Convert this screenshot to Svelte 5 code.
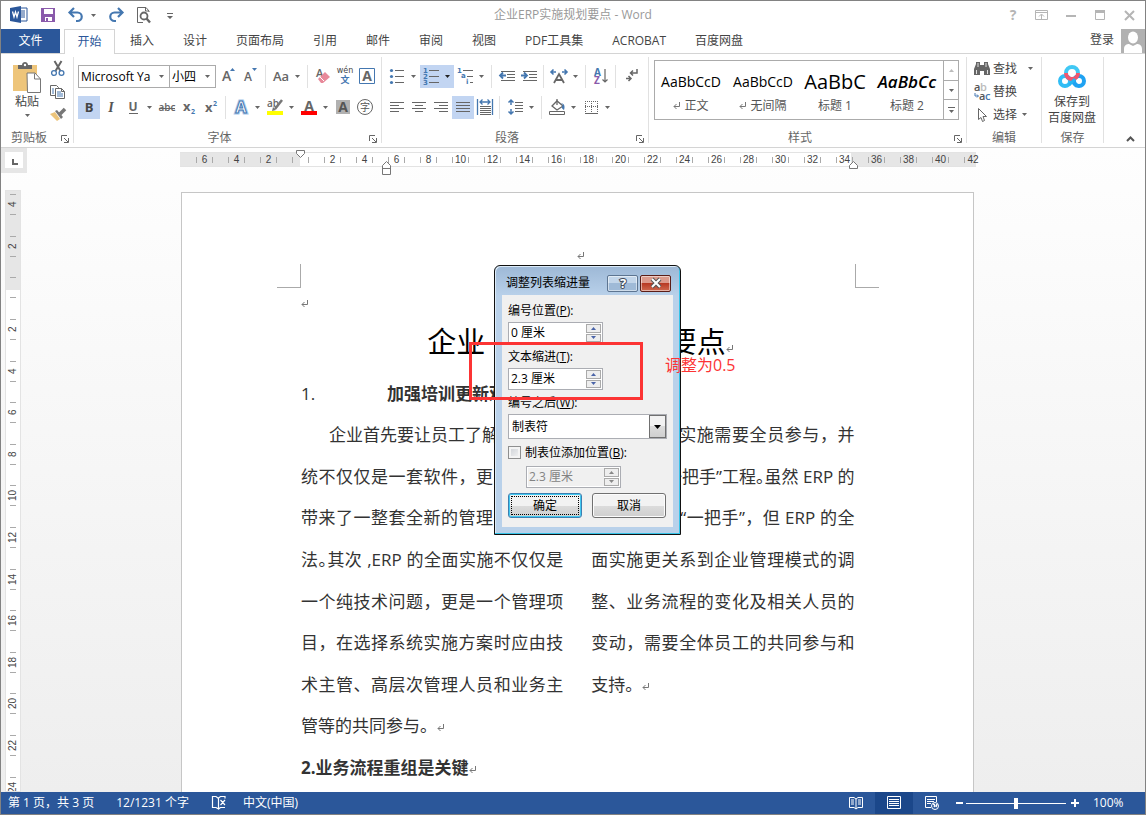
<script>
  const G = '#666';
  const B = '#4477b0';
  const lines = (rows, color = G) =>
    rows.map(([x, y, w]) => `<rect x="${x}" y="${y}" width="${w}" height="1" fill="${color}"/>`).join('');
  const letter = (t, x, y, size, extra = '') =>
    `<text x="${x}" y="${y}" font-size="${size}" font-family="Open Sans, sans-serif" fill="${G}" ${extra}>${t}</text>`;

  const icons = {
    word: `<path d="M10 2h7v13h-7z" fill="#fff" stroke="#2b579a"/><path d="M11 5h4M11 7h4M11 9h4M11 11h4" stroke="#2b579a"/><path d="M0 2 11 0v17L0 15z" fill="#2b579a"/><path d="M2.500 5.500 4 11l1.500-5L7 11l1.500-5.500" fill="none" stroke="#fff" stroke-width="1.300"/>`,
    save: `<path d="M1 1h14v14H1z" fill="#8a5aab"/><path d="M4 2h9v5H4zM5 10h7v4H5z" fill="#fff"/><path d="M6 11h2v4H6z" fill="#8a5aab"/>`,
    undo: `<path d="M6 1 1.500 5.500 6 10M2 5.500h7.500a4 4 0 0 1 0 8.500H8" fill="none" stroke="${B}" stroke-width="2.200"/>`,
    redo: `<path d="M10 1l4.500 4.500L10 10M14 5.500H6.500a4 4 0 0 0 0 8.500H8" fill="none" stroke="${B}" stroke-width="2.200"/>`,
    preview: `<path d="M13 5V4L10 .5H1.500v15H7" fill="none" stroke="${G}"/><path d="M9.500.5V4H13" fill="none" stroke="${G}"/><circle cx="8" cy="9" r="3.500" fill="none" stroke="${G}" stroke-width="1.800"/><path d="m10.500 11.500 3.500 4" stroke="${G}" stroke-width="2.400"/>`,
    customize: `<path d="M5 6h6v1H5zM5 9h6L8 12z" fill="${G}"/>`,
    help: `<text x="8" y="13" font-size="14" font-weight="700" text-anchor="middle" font-family="Open Sans, sans-serif" fill="#b5b5b5">?</text>`,
    ribbonopt: `<path d="M1.500 3.500h12v9h-12zM1.500 5.500h12M7.500 12V7.500M5 9.500l2.500-2.500 2.500 2.500" fill="none" stroke="#b5b5b5"/>`,
    min: `<path d="M3 8h10v2H3z" fill="#b5b5b5"/>`,
    max: `<path d="M3.500 4.500h9v8h-9z" fill="none" stroke="#b5b5b5"/><path d="M3 3h10v3H3z" fill="#b5b5b5"/>`,
    close: `<path d="m4 4 9 9M13 4l-9 9" stroke="#b5b5b5" stroke-width="2"/>`,
    cut: `<path d="M4.500 0 10.500 10M11.500 0 5.500 10" stroke="${G}" stroke-width="2"/><circle cx="4" cy="12" r="2.400" fill="#fff" stroke="${B}" stroke-width="1.300"/><circle cx="11.500" cy="12" r="2.400" fill="#fff" stroke="${B}" stroke-width="1.300"/>`,
    copy: `<path d="M.5 1.500h6l2 2v8h-8z" fill="#fff" stroke="${G}"/><path d="M5.500 4.500h6l3 3v7h-9z" fill="#fff" stroke="${G}"/><path d="M2 5h2M2 7h2M2 9h2M7 8h4M7 10h6M7 12h6" stroke="${B}"/><path d="M11.500 4.500v3h3" fill="none" stroke="${G}"/>`,
    brush: `<path d="M0 7 7 14 10 12 5 5z" fill="#ecc47a"/><path d="m5 4 6 8 2-2-6-7z" fill="#777"/><path d="m10 7 5-5" stroke="#777" stroke-width="3.500"/>`,
    grow: letter('A', 1, 13, 14, 'font-weight="600"') + `<path d="M9 3h5L11.500 0z" fill="${B}"/>`,
    shrink: letter('A', 1, 13, 12, 'font-weight="600"') + `<path d="M9 0h5l-2.500 3z" fill="${B}"/>`,
    erase: letter('A', 1, 9, 11, 'font-weight="600"') + `<path d="m3 11 7-7 5 5-7 6H6z" fill="#e8899a"/><path d="m5 9 4 4" stroke="#fff"/>`,
    phonetic: `<text x="8" y="5" text-anchor="middle" font-size="8" font-family="DejaVu Sans, sans-serif" fill="#444">wén</text><text x="8" y="15" text-anchor="middle" font-size="9" font-weight="700" font-family="Noto Sans CJK SC, sans-serif" fill="${B}">文</text>`,
    border: `<path d="M.5.5h15v15H.5z" fill="#fff" stroke="${B}"/>` + letter('A', 8, 13, 14, 'text-anchor="middle" font-weight="700"'),
    bold: `<text x="8" y="13" text-anchor="middle" font-size="13" font-weight="700" font-family="Open Sans, sans-serif" fill="#444">B</text>`,
    italic: `<text x="8" y="13" text-anchor="middle" font-size="14" font-style="italic" font-weight="700" font-family="Liberation Serif, serif" fill="#555">I</text>`,
    underline: letter('U', 8, 12, 12, 'text-anchor="middle" font-weight="700"') + lines([[4, 14, 9]]),
    strike: letter('abc', 8, 12, 10, 'text-anchor="middle" font-weight="600"') + lines([[0, 9, 16]]),
    sub: letter('x', 2, 12, 13, 'font-weight="700"') + `<text x="10" y="15" font-size="7" font-weight="700" font-family="Open Sans, sans-serif" fill="${B}">2</text>`,
    sup: letter('x', 2, 13, 13, 'font-weight="700"') + `<text x="10" y="7" font-size="7" font-weight="700" font-family="Open Sans, sans-serif" fill="${B}">2</text>`,
    effect: `<text x="8" y="14" text-anchor="middle" font-size="16" font-weight="700" font-family="Open Sans, sans-serif" fill="#fff" stroke="#a9c8ea" stroke-width="3">A</text><text x="8" y="14" text-anchor="middle" font-size="16" font-weight="700" font-family="Open Sans, sans-serif" fill="#fff" stroke="${B}">A</text>`,
    highlight: letter('ab', 0, 8, 10, 'font-weight="600"') + `<path d="m15 1-7 9" stroke="#777" stroke-width="2.500"/><path d="m6 8 3 3-4 1z" fill="#777"/><path d="M0 12h16v4H0z" fill="#ff0"/>`,
    fontcolor: letter('A', 8, 12, 14, 'text-anchor="middle" font-weight="700"') + `<path d="M0 12h16v4H0z" fill="#f00"/>`,
    shade: `<path d="M1 1h14v14H1z" fill="#b1b1b1"/><text x="8" y="13" text-anchor="middle" font-size="14" font-weight="700" font-family="Open Sans, sans-serif" fill="#555">A</text>`,
    enclose: `<circle cx="8" cy="8" r="7.500" fill="none" stroke="${G}"/><text x="8" y="12" text-anchor="middle" font-size="10" font-family="Noto Sans CJK SC, sans-serif" fill="#555">字</text>`,
    bullets: `<g fill="${B}"><circle cx="2.500" cy="2.500" r="1.600"/><circle cx="2.500" cy="8.500" r="1.600"/><circle cx="2.500" cy="14.500" r="1.600"/></g>` + lines([[6, 2, 9], [6, 8, 9], [6, 14, 9]]),
    numbers: ['1', '2', '3'].map((n, i) => `<text x="0" y="${5 + i * 6}" font-size="7" font-weight="700" font-family="DejaVu Sans, sans-serif" fill="${B}">${n}</text>`).join('') + lines([[6, 2, 10], [6, 8, 10], [6, 14, 10]]),
    levels: `<g font-size="7" font-weight="700" font-family="DejaVu Sans, sans-serif" fill="${B}"><text x="0" y="5">1</text><text x="4" y="10">a</text><text x="9" y="16">i</text></g>` + lines([[6, 2, 10], [10, 8, 6], [13, 14, 3]]),
    outdent: lines([[2, 3, 14], [8, 6, 8], [8, 9, 8], [2, 12, 14]]) + `<path d="M7 7.500H1M4 4.500l-3 3 3 3" fill="none" stroke="${B}" stroke-width="1.800"/>`,
    indent: lines([[2, 3, 14], [8, 6, 8], [8, 9, 8], [2, 12, 14]]) + `<path d="M0 7.500h6M3 4.500l3 3-3 3" fill="none" stroke="${B}" stroke-width="1.800"/>`,
    scale: `<path d="m3 15 5-9 5 9M5 12h6" fill="none" stroke="${G}" stroke-width="1.800"/><path d="M0 4h5M2.500 1.500 0 4l2.500 2.500M11 4h5M13.500 1.500 16 4l-2.500 2.500" fill="none" stroke="${B}" stroke-width="1.600"/>`,
    sort: `<text x="1" y="8" font-size="10" font-weight="700" font-family="Open Sans, sans-serif" fill="${B}">A</text><text x="1" y="16" font-size="10" font-weight="700" font-family="Open Sans, sans-serif" fill="#8a5aab">Z</text><path d="M12 1v13M9.500 11.500 12 14l2.500-2.500" fill="none" stroke="${G}" stroke-width="1.200"/>`,
    marks: `<path d="M14 1v4H8M10 2.500 7.500 5l2.500 2.500M3 10.500h5M5.500 8 8 10.500 5.500 13" fill="none" stroke="${G}" stroke-width="1.500"/>`,
    left: lines([[1, 3, 14], [1, 6, 9], [1, 9, 14], [1, 12, 9]]),
    center: lines([[1, 3, 14], [4, 6, 8], [1, 9, 14], [4, 12, 8]]),
    right: lines([[1, 3, 14], [6, 6, 9], [1, 9, 14], [6, 12, 9]]),
    justify: lines([[1, 3, 14], [1, 6, 14], [1, 9, 14], [1, 12, 14]]),
    distribute: `<path d="M.5 0v16M15.500 0v16M3 3h10M5.500.5 3 3l2.500 2.500M10.500.5 13 3l-2.500 2.500" fill="none" stroke="${B}" stroke-width="1.300"/>` + lines([[3, 7, 11], [3, 9, 11], [3, 11, 11], [3, 13, 11], [3, 15, 11]]),
    spacing: `<path d="M4 1v5M1.500 3.500 4 1l2.500 2.500M4 10v5M1.500 12.500 4 15l2.500-2.500" fill="none" stroke="${B}" stroke-width="1.500"/>` + lines([[8, 3, 8], [8, 6, 8], [8, 9, 8], [8, 12, 8]]),
    fill: `<path d="m3 7 5-5 6 5-6 4z" fill="#fff" stroke="${G}" stroke-width="1.300"/><path d="M8 6V0" stroke="${G}" stroke-width="1.300"/><path d="M12 4c4 1 4 4 3 7-2-1-3-3-1-5z" fill="${B}"/><path d="M.5 12.500h15v3H.5z" fill="#fff" stroke="${G}"/>`,
    grid: `<path d="M2.500 2v11M8.500 2v11M14.500 2v11M2 2.500h13M2 7.500h13" stroke="${G}" stroke-dasharray="1 1"/>` + lines([[2, 14, 13]]),
    find: `<path d="M2 3V1h4v3h4V1h4v2l2 5v6h-6v-4H6v4H0V8z" fill="${G}"/><path d="M2.500 9v4M13.500 9v4M4 2v4M12 2v4" stroke="#fff" stroke-width=".8"/>`,
    replace: `<g font-size="11" font-weight="600" font-family="Open Sans, sans-serif"><text x="0" y="7" fill="#555">a</text><text x="6" y="7" fill="#bbb">b</text><text x="5" y="16" fill="#555">a</text><text x="11" y="16" fill="${B}">c</text></g><path d="M1 9v3h3M3 10.500 4.500 12 3 13.500" fill="none" stroke="${B}"/>`,
    select: `<path d="M4.500 1.500v11l2.500-2 1.500 4 2-1-1.500-4h3.500z" fill="#fff" stroke="${G}"/>`,
    launcher: `<path d="M.5 6V.5H6" fill="none" stroke="${G}"/><path d="M3 3l4 4M7.500 3v4.500H3" fill="none" stroke="${G}"/>`,
    spell: `<path d="M7.500 3.500 5 1.500H1.500v11H5l2.500 1.500V3l2-1.500H14v2M7.500 14l2-1.500H14M9.500 5l4.500 5M14 5l-4.500 5" fill="none" stroke="#fff" stroke-width="1.200"/>`,
    read: `<path d="M8 4 6 2.500H1.500v10H6L8 14l2-1.500h4.500v-10H10zM8 4v10M3 5h3M3 7h3M3 9h3M10 5h3M10 7h3M10 9h3" fill="none" stroke="#fff"/>`,
    print: `<path d="M1.500 1.500h13v12h-13zM3 4.500h10M3 6.500h10M3 8.500h10M3 10.500h10" fill="none" stroke="#fff"/>`,
    web: `<path d="M7 12.500H1.500v-11h11V7M3 4.500h8M3 6.500h7M3 8.500h4" fill="none" stroke="#fff"/><circle cx="11" cy="11" r="3.500" fill="#2b579a" stroke="#fff"/><path d="M9 9c2 0 2 2 1 3M13 9l-1 3" stroke="#fff" stroke-width="1.500" fill="none"/>`
  };

  const tabs = ['插入', '设计', '页面布局', '引用', '邮件', '审阅', '视图', 'PDF工具集', 'ACROBAT', '百度网盘'];
  const windowButtons = [['help', '帮助'], ['ribbonopt', '功能区显示选项'], ['min', '最小化'], ['max', '最大化'], ['close', '关闭']];
  const styles = [
    { sample: 'AaBbCcD', name: '正文', mark: true, kind: '' },
    { sample: 'AaBbCcD', name: '无间隔', mark: true, kind: '' },
    { sample: 'AaBbC', name: '标题 1', mark: false, kind: 'h1' },
    { sample: 'AaBbCc', name: '标题 2', mark: false, kind: 'h2' }
  ];
  const hTicks = Array.from({ length: 25 }, (_, i) => Math.abs(i * 2 - 6));
  const vTicks = Array.from({ length: 15 }, (_, i) => Math.abs(i * 2 - 4));

  let first = $state('0 厘米');
  let indent = $state('2.3 厘米');
  let tabStop = $state('2.3 厘米');
  let addStop = $state(false);
  let zoom = $state(50);
</script>

{#snippet icon(name, size = 16)}
  <svg width={size} height={size} viewBox="0 0 {size} {size}" aria-hidden="true">{@html icons[name]}</svg>
{/snippet}
{#snippet arrow()}
  <svg class="arrow" width="5" height="3" viewBox="0 0 5 3" aria-hidden="true"><path d="M0 0h5L2.500 3z" fill="currentColor" /></svg>
{/snippet}
{#snippet tool(name, label, on = false)}
  <button class="tool" class:on aria-label={label}>{@render icon(name)}</button>
{/snippet}
{#snippet split(name, label, on = false)}
  <span class="split" class:on>
    <button class="tool" aria-label={label}>{@render icon(name)}</button>
    <button class="drop" aria-label="{label}选项">{@render arrow()}</button>
  </span>
{/snippet}
{#snippet pilcrow()}
  <svg class="pilcrow" width="8" height="8" viewBox="0 0 8 8" aria-hidden="true"><path d="M6.500 0v4.500H1M3.500 2 1 4.500 3.500 7" fill="none" stroke="#777" /></svg>
{/snippet}
{#snippet footer(name)}
  <footer class="launchable"><span>{name}</span><button class="launch" aria-label="{name}设置">{@render icon('launcher', 8)}</button></footer>
{/snippet}
{#snippet spinButtons(disabled = false)}
  <span class="spin-buttons">
    <button type="button" {disabled} aria-label="增加"><svg width="5" height="3" viewBox="0 0 5 3"><path d="M0 3h5L2.500 0z" fill="currentColor" /></svg></button>
    <button type="button" {disabled} aria-label="减少">{@render arrow()}</button>
  </span>
{/snippet}

<div class="window">
  <header class="titlebar">
    <div class="quick">
      <span class="logo">{@render icon('word', 18)}</span>
      <button aria-label="保存">{@render icon('save')}</button>
      <button class="with-drop" aria-label="撤消">{@render icon('undo')}{@render arrow()}</button>
      <button aria-label="恢复">{@render icon('redo')}</button>
      <button aria-label="打印预览">{@render icon('preview')}</button>
      <button class="custom" aria-label="自定义快速访问工具栏">{@render icon('customize')}</button>
    </div>
    <h1>企业ERP实施规划要点 - Word</h1>
    <div class="win-buttons">
      {#each windowButtons as [name, label]}
        <button aria-label={label}>{@render icon(name)}</button>
      {/each}
    </div>
  </header>

  <nav class="tabs">
    <button class="file">文件</button>
    <button class="active">开始</button>
    {#each tabs as tab}
      <button class="tab">{tab}</button>
    {/each}
    <button class="login">登录</button>
    <span class="avatar">
      <svg width="24" height="24" viewBox="0 0 24 24" aria-hidden="true"><path d="M0 0h24v24H0z" fill="#b1b1b1" /><ellipse cx="12" cy="8.500" rx="5" ry="6" fill="#fff" /><path d="M3 24v-4c0-4 3-5 5-5l4 2 4-2c2 0 5 1 5 5v4z" fill="#fff" /></svg>
    </span>
  </nav>

  <section class="ribbon">
    <div class="group clipboard">
      <div class="content">
        <button class="paste">
          <svg width="28" height="31" viewBox="0 0 28 31" aria-hidden="true">
            <path d="M0 3h24v26H0z" fill="#eec57a" /><path d="M5 7V3h4c0-4 6-4 6 0h4v4z" fill="#666" /><circle cx="12" cy="3" r="1.200" fill="#fff" />
            <path d="M14 11h8l5.500 6v13.500H14.500z" fill="#fff" stroke="#777" /><path d="M21.500 11.500v5.500h6" fill="none" stroke="#777" />
          </svg>
          <span>粘贴</span>
          {@render arrow()}
        </button>
        <div class="stack">
          <button aria-label="剪切">{@render icon('cut')}</button>
          <button aria-label="复制">{@render icon('copy')}</button>
          <button aria-label="格式刷">{@render icon('brush')}</button>
        </div>
      </div>
      {@render footer('剪贴板')}
    </div>

    <div class="group font">
      <div class="content rows">
        <div class="row">
          <label class="combo family"><select aria-label="字体"><option>Microsoft Ya</option></select>{@render arrow()}</label>
          <label class="combo size"><select aria-label="字号"><option>小四</option></select>{@render arrow()}</label>
          {@render tool('grow', '增大字号')}
          {@render tool('shrink', '减小字号')}
          <i class="sep"></i>
          <span class="split"><button class="tool case">Aa</button><button class="drop" aria-label="更改大小写">{@render arrow()}</button></span>
          <i class="sep"></i>
          {@render tool('erase', '清除格式')}
          {@render tool('phonetic', '拼音指南')}
          {@render tool('border', '字符边框')}
        </div>
        <div class="row">
          {@render tool('bold', '加粗', true)}
          {@render tool('italic', '倾斜')}
          {@render split('underline', '下划线')}
          {@render tool('strike', '删除线')}
          {@render tool('sub', '下标')}
          {@render tool('sup', '上标')}
          <i class="sep"></i>
          {@render split('effect', '文本效果')}
          {@render split('highlight', '突出显示')}
          {@render split('fontcolor', '字体颜色')}
          {@render tool('shade', '字符底纹')}
          {@render tool('enclose', '带圈字符')}
        </div>
      </div>
      {@render footer('字体')}
    </div>

    <div class="group paragraph">
      <div class="content rows">
        <div class="row">
          {@render split('bullets', '项目符号')}
          {@render split('numbers', '编号', true)}
          {@render split('levels', '多级列表')}
          <i class="sep"></i>
          {@render tool('outdent', '减少缩进量')}
          {@render tool('indent', '增加缩进量')}
          <i class="sep"></i>
          {@render split('scale', '中文版式')}
          <i class="sep"></i>
          {@render tool('sort', '排序')}
          <i class="sep"></i>
          {@render tool('marks', '显示编辑标记')}
        </div>
        <div class="row">
          {@render tool('left', '左对齐')}
          {@render tool('center', '居中')}
          {@render tool('right', '右对齐')}
          {@render tool('justify', '两端对齐', true)}
          {@render tool('distribute', '分散对齐')}
          <i class="sep"></i>
          {@render split('spacing', '行距')}
          <i class="sep"></i>
          {@render split('fill', '底纹')}
          {@render split('grid', '边框')}
        </div>
      </div>
      {@render footer('段落')}
    </div>

    <div class="group styles">
      <div class="content">
        <div class="gallery">
          {#each styles as s}
            <button class="style {s.kind}">
              <span class="sample">{s.sample}</span>
              <span class="name">{#if s.mark}{@render pilcrow()}{/if}{s.name}</span>
            </button>
          {/each}
          <div class="scroller">
            <button disabled aria-label="上一行"><svg width="5" height="3" viewBox="0 0 5 3"><path d="M0 3h5L2.500 0z" fill="#bbb" /></svg></button>
            <button aria-label="下一行">{@render arrow()}</button>
            <button class="more" aria-label="其他">{@render arrow()}</button>
          </div>
        </div>
      </div>
      {@render footer('样式')}
    </div>

    <div class="group edit">
      <div class="content stack">
        <button>{@render icon('find')}<span>查找</span><b class="wide">{@render arrow()}</b></button>
        <button>{@render icon('replace')}<span>替换</span></button>
        <button>{@render icon('select')}<span>选择</span><b>{@render arrow()}</b></button>
      </div>
      <footer><span>编辑</span></footer>
    </div>

    <div class="group cloud">
      <div class="content">
        <button class="disk">
          <svg width="28" height="24" viewBox="0 0 28 24" aria-hidden="true" fill="none">
            <path d="M9 12 14 16l5 5" stroke="#27b5f3" stroke-width="4" />
            <circle cx="7" cy="16" r="5" stroke="#30bdf5" stroke-width="4" />
            <circle cx="21" cy="16" r="5" stroke="#1fa2f2" stroke-width="4" />
            <path d="M8 8a6 6 0 0 1 12 0" stroke="#40c8f4" stroke-width="4" />
            <path d="M8 8a6 6 0 0 0 12 0" stroke="#f2566d" stroke-width="4" />
            <path d="m11 20 6-6" stroke="#27b5f3" stroke-width="3" />
          </svg>
          <span>保存到<br />百度网盘</span>
        </button>
      </div>
      <footer><span>保存</span></footer>
    </div>
    <button class="collapse" aria-label="折叠功能区"><svg width="9" height="6" viewBox="0 0 9 6"><path d="m1 5 3.500-3.500L8 5" fill="none" stroke="#555" stroke-width="2" /></svg></button>
  </section>

  <main>
    <div class="corner"><button aria-label="制表符类型"><svg width="6" height="6" viewBox="0 0 6 6"><path d="M1 0v5h5" fill="none" stroke="#666" stroke-width="2" /></svg></button></div>
    <div class="hruler">
      <div class="scale">
        {#each hTicks as n}
          <span><b>{n || ''}</b></span>
        {/each}
        <svg class="mark first" width="9" height="8" viewBox="0 0 9 8"><path d="M.5.5h8v3l-4 4-4-4z" fill="#fff" stroke="#777" /></svg>
        <svg class="mark hang" width="9" height="14" viewBox="0 0 9 14"><path d="M.5 13.500V4.500l4-4 4 4v9zM.5 7.500h8" fill="#fff" stroke="#777" /></svg>
        <svg class="mark end" width="9" height="8" viewBox="0 0 9 8"><path d="M.5 7.500v-3l4-4 4 4v3z" fill="#fff" stroke="#777" /></svg>
      </div>
    </div>
    <div class="vruler">
      <div class="vscale">
        {#each vTicks as n}
          <span><b>{n || ''}</b></span>
        {/each}
      </div>
    </div>
    <div class="canvas">
      <article class="page">
        <div class="head">{@render pilcrow()}</div>
        <i class="crop tl"></i><i class="crop tr"></i>
        <div class="blank">{@render pilcrow()}</div>
        <h2>企业&nbsp; ERP实施规划要点{@render pilcrow()}</h2>
        <h3><span class="num">1.</span>加强培训更新观念{@render pilcrow()}</h3>
        <div class="columns">
          <div>
            <p>
              <span class="line start">企业首先要让员工了解到ERP系</span>
              <span class="line">统不仅仅是一套软件，更是为企业</span>
              <span class="line">带来了一整套全新的管理思想和方</span>
              <span class="line">法<span class="half">。</span>其次 ,ERP 的全面实施不仅仅是</span>
              <span class="line">一个纯技术问题，更是一个管理项</span>
              <span class="line">目，在选择系统实施方案时应由技</span>
              <span class="line">术主管、高层次管理人员和业务主</span>
              <span class="line last">管等的共同参与。{@render pilcrow()}</span>
            </p>
            <h4>2.业务流程重组是关键{@render pilcrow()}</h4>
          </div>
          <p>
            <span class="line">因此系统的实施需要全员参与，并</span>
            <span class="line">且是企业“一把手”工程<span class="half">。</span>虽然 ERP 的</span>
            <span class="line">实 施 需 要 “一把手”，但 ERP 的全</span>
            <span class="line">面实施更关系到企业管理模式的调</span>
            <span class="line">整、业务流程的变化及相关人员的</span>
            <span class="line">变动，需要全体员工的共同参与和</span>
            <span class="line last">支持。{@render pilcrow()}</span>
          </p>
        </div>

        <form class="dialog" onsubmit={(e) => e.preventDefault()}>
          <header>
            <strong>调整列表缩进量</strong>
            <button type="button" class="q" aria-label="帮助"><svg width="12" height="12" viewBox="0 0 12 12"><text x="6" y="11" text-anchor="middle" font-size="13" font-weight="700" font-family="Open Sans, sans-serif" fill="#fff" stroke="#444d5c" stroke-width="2" paint-order="stroke">?</text></svg></button>
            <button type="button" class="x" aria-label="关闭"><svg width="12" height="10" viewBox="0 0 12 10"><path d="m2 1 8 8M10 1 2 9" stroke="#555" stroke-width="4" /><path d="m2 1 8 8M10 1 2 9" stroke="#fff" stroke-width="2" /></svg></button>
          </header>
          <div class="body">
            <label for="pos">编号位置(<u>P</u>):</label>
            <div class="spin"><input id="pos" bind:value={first} />{@render spinButtons()}</div>
            <label for="ind">文本缩进(<u>T</u>):</label>
            <div class="spin"><input id="ind" bind:value={indent} />{@render spinButtons()}</div>
            <label for="after">编号之后(<u>W</u>):</label>
            <div class="choice"><select id="after"><option>制表符</option></select><span><svg width="7" height="4" viewBox="0 0 7 4"><path d="M0 0h7L3.500 4z" /></svg></span></div>
            <div class="check"><input id="stop" type="checkbox" bind:checked={addStop} /><label for="stop">制表位添加位置(<u>B</u>):</label></div>
            <div class="spin off"><input aria-label="制表位" bind:value={tabStop} disabled />{@render spinButtons(true)}</div>
            <div class="actions"><button class="ok">确定</button><button type="button">取消</button></div>
          </div>
        </form>
        <div class="frame"></div>
        <div class="note">调整为0.5</div>
      </article>
    </div>
  </main>

  <footer class="status">
    <span>第 1 页，共 3 页</span>
    <span>12/1231 个字</span>
    <button aria-label="校对">{@render icon('spell')}</button>
    <span>中文(中国)</span>
    <div class="views">
      <button aria-label="阅读视图">{@render icon('read')}</button>
      <button class="current" aria-label="页面视图">{@render icon('print')}</button>
      <button aria-label="Web 版式视图">{@render icon('web')}</button>
    </div>
    <button class="step" aria-label="缩小"><svg width="8" height="8" viewBox="0 0 8 8"><path d="M0 3h7v2H0z" fill="#fff" /></svg></button>
    <input type="range" min="0" max="100" bind:value={zoom} aria-label="缩放" />
    <button class="step" aria-label="放大"><svg width="8" height="8" viewBox="0 0 8 8"><path d="M0 3h3V0h2v3h3v2H5v3H3V5H0z" fill="#fff" /></svg></button>
    <span class="percent">100%</span>
  </footer>
</div>

<style>
  :global(body) { margin: 0; }
  .window, .window * { box-sizing: border-box; }
  .window {
    display: flex; flex-direction: column; height: 100vh; overflow: hidden;
    border: 1px solid #828282; background: #fff; color: #444;
    font: 12px/16px "Open Sans", "Noto Sans CJK SC", sans-serif;
  }
  button { padding: 0; border: 0; background: none; font: inherit; color: inherit; display: flex; align-items: center; justify-content: center; }
  svg { display: block; flex: none; overflow: visible; }
  select, input { font: inherit; margin: 0; }
  h1, h2, h3, h4, p { margin: 0; font-weight: 400; }
  .arrow { color: #666; }

  .titlebar { display: grid; grid-template-columns: 1fr auto 1fr; height: 28px; align-items: center; flex: none; }
  .titlebar h1 { font-size: 12px; color: #999; }
  .quick { display: flex; align-items: center; padding-left: 9px; gap: 12px; }
  .quick .with-drop { gap: 7px; }
  .quick .custom { margin-left: -2px; }
  .win-buttons { display: flex; justify-content: flex-end; gap: 13px; padding-right: 8px; }

  .tabs { display: flex; height: 25px; flex: none; border-bottom: 1px solid #d4d4d4; }
  .tabs button { white-space: nowrap; }
  .tabs .file { width: 59px; background: #2b579a; color: #fff; margin-right: 4px; }
  .tabs .active { width: 51px; margin: 0 1px -1px 0; border: 1px solid #d4d4d4; border-bottom: 0; background: #fff; color: #2b579a; }
  .tabs .tab { padding: 0 14px; margin-right: 1px; }
  .tabs .login { margin: 0 7px 2px auto; }

  .ribbon { display: flex; height: 94px; flex: none; padding: 3px 0 4px; border-bottom: 1px solid #d4d4d4; position: relative; }
  .group { display: flex; flex-direction: column; border-right: 1px solid #e1e1e1; flex: none; }
  .content { display: flex; height: 73px; flex: none; }
  .group footer { display: flex; justify-content: center; height: 13px; position: relative; color: #666; }
  .group .launchable { padding-right: 20px; }
  .launch { position: absolute; right: 4px; bottom: 0; }
  .clipboard { width: 73px; }
  .clipboard .content { padding-left: 10px; }
  .group.clipboard footer { padding-right: 16px; }
  .paste { flex-direction: column; width: 32px; justify-content: flex-start; padding-top: 5px; gap: 1px; margin-right: 7px; }
  .paste .arrow { margin-top: 3px; }
  .stack { display: flex; flex-direction: column; }
  .stack button { height: 23px; }
  .rows { flex-direction: column; gap: 8px; padding-top: 8px; }
  .row { display: flex; height: 23px; }
  .font { width: 308px; padding-left: 4px; }
  .paragraph { width: 267px; padding-left: 4px; }
  .tool { width: 22px; padding-bottom: 1px; }
  .tool.case { font-weight: 600; font-size: 13px; color: #666; }
  .split { display: flex; margin-right: 2px; }
  .split.on { margin-right: 0; padding-right: 2px; }
  .split.on .arrow { color: #222; }
  .drop { width: 10px; }
  .on { background: #c2d5f2; }
  .sep { width: 1px; margin: 0 4px 0 3px; background: #e1e1e1; }
  .combo { display: flex; align-items: center; border: 1px solid #ababab; position: relative; }
  .combo select { appearance: none; border: 0; background: none; width: 100%; padding: 0 0 0 2px; color: #000; outline: 0; }
  .combo .arrow { position: absolute; right: 5px; }
  .family { width: 92px; }
  .size { width: 47px; margin: 0 2px 0 -1px; }
  .styles { width: 318px; padding-left: 5px; }
  .gallery { display: flex; width: 305px; height: 60px; margin-top: 3px; border: 1px solid #ababab; }
  .style { width: 72px; flex-direction: column; overflow: hidden; padding-top: 2px; }
  .sample { height: 30px; line-height: 30px; font-size: 14px; color: #000; white-space: nowrap; }
  .h1 .sample { font-size: 20px; }
  .h2 .sample { font-size: 17px; font-style: italic; font-weight: 600; }
  .name { display: flex; align-items: center; gap: 3px; height: 18px; color: #555; }
  .scroller { display: flex; flex-direction: column; width: 15px; margin-left: auto; border-left: 1px solid #ababab; }
  .scroller button { flex: 1; border-bottom: 1px solid #ababab; }
  .scroller .more { border-bottom: 0; flex-direction: column; gap: 2px; }
  .more::before { content: ""; width: 7px; height: 1px; background: #666; }
  .edit { width: 75px; }
  .edit .content { padding-left: 7px; }
  .edit .content button { justify-content: flex-start; gap: 3px; }
  .edit b { margin-left: 2px; }
  .edit .wide { margin-left: 8px; }
  .cloud { width: 62px; }
  .disk { flex-direction: column; width: 60px; gap: 5px; padding-top: 3px; }
  .collapse { position: absolute; right: 10px; bottom: 5px; }

  main { flex: 1; min-height: 0; overflow: hidden; display: grid; grid-template-columns: 26px 1fr; grid-template-rows: 42px 1fr; padding-right: 17px; background: linear-gradient(#fefefe, #eee); }
  .corner { height: 25px; background: #e6e6e6; padding: 4px; }
  .corner button { width: 18px; height: 16px; background: #fff; padding: 4px 0 0 2px; }
  .hruler { display: flex; justify-content: center; padding-top: 4px; }
  .scale { position: relative; display: flex; width: 796px; height: 15px; padding-left: 9px; flex: none; border: solid #e3e3e3; border-width: 1px 0; background: linear-gradient(90deg, #e6e6e6 120px, #fff 120px, #fff 671px, #e6e6e6 671px); font: 10px/14px "Liberation Sans", Arial, sans-serif; }
  .scale span { width: 32px; flex: none; display: flex; justify-content: center; align-items: center; }
  .scale b { width: 17px; height: 6px; display: flex; align-items: center; justify-content: center; border: solid #aaa; border-width: 0 1px; font-weight: 400; }
  .scale span:last-of-type b { border-right: 0; }
  .mark { position: absolute; }
  .first { left: 116px; top: -3px; }
  .hang { left: 202px; top: 8px; }
  .end { left: 669px; top: 8px; }
  .vruler { width: 16px; margin-left: 4px; overflow: hidden; border: 1px solid #e3e3e3; background: linear-gradient(#e6e6e6 99px, #fff 99px); font: 10px/14px "Liberation Sans", Arial, sans-serif; }
  .vscale { display: flex; flex-direction: column; height: 624px; margin-top: -7px; }
  .vscale span { flex: 1; display: flex; align-items: center; justify-content: center; }
  .vscale b { writing-mode: vertical-rl; transform: rotate(180deg); width: 6px; height: 21px; display: flex; align-items: center; justify-content: center; border: solid #aaa; border-width: 1px 0; font-weight: 400; }

  .canvas { display: flex; justify-content: center; padding-top: 2px; min-height: 0; }
  .page { position: relative; width: 793px; flex: none; min-height: 100%; border: 1px solid #c6c6c6; border-bottom: 0; background: #fff; padding: 57px 119px 0; color: #333; }
  .head { display: flex; justify-content: center; padding: 2px 0 0 6px; height: 43px; }
  .blank { height: 17px; padding-top: 3px; }
  .crop { position: absolute; top: 71px; width: 24px; height: 24px; border: solid #aaa; border-width: 0 0 1px; }
  .tl { left: 95px; border-right-width: 1px; }
  .tr { right: 94px; border-left-width: 1px; }
  .pilcrow { display: inline-block; }
  h2 { font-size: 29px; line-height: 64px; padding-left: 6px; text-align: center; color: #000; white-space: nowrap; }
  h3 { font-size: 17px; line-height: 40px; font-weight: 700; white-space: nowrap; }
  .num { display: inline-block; width: 86px; font-weight: 400; }
  .columns { display: grid; grid-template-columns: 1fr 1fr; column-gap: 28px; font-size: 17px; line-height: 2.45; }
  .line { display: block; white-space: nowrap; text-align: justify; text-align-last: justify; }
  .start { padding-left: 28px; }
  .last { text-align-last: left; }
  .half { font-feature-settings: "halt"; }
  h4 { font-weight: 700; white-space: nowrap; }

  .dialog { position: absolute; left: 312px; top: 72px; width: 187px; padding: 0 7px 7px; border: 1px solid #111; border-radius: 6px 6px 0 0; background: linear-gradient(#9db8d6, #b9d1ea 30px, #b9d1ea); box-shadow: inset -1px -1px #35c4e8, inset 1px 1px #dcebf8; color: #000; }
  .dialog header { display: flex; height: 29px; align-items: center; padding: 5px 2px 0 4px; gap: 2px; }
  .dialog strong { font-weight: 400; margin-right: auto; white-space: nowrap; }
  .dialog header button { width: 31px; height: 17px; border: 1px solid #5d7591; border-radius: 2px; box-shadow: inset 0 0 0 1px #ffffff80; background: linear-gradient(#c3d6ea 50%, #9fbad7 50%); }
  .dialog header .x { border-color: #5b1d17; background: linear-gradient(#dc9a8c 50%, #b83a24 50%, #cf6a50); }
  .body { display: flex; flex-direction: column; background: #f0f0f0; padding: 5px 6px 9px; line-height: 22px; }
  .spin { display: flex; width: 95px; height: 22px; margin-bottom: 2px; padding: 1px; background: #fff; border: 1px solid #abadb3; }
  .spin input { border: 0; width: 76px; flex: none; padding: 0 1px; background: none; color: #000; }
  .spin-buttons { flex: 1; display: flex; flex-direction: column; gap: 1px; }
  .spin-buttons button { flex: 1; border: 1px solid #aaa; background: #eee; color: #4a64a8; }
  .spin-buttons .arrow { color: inherit; }
  .spin.off { margin: 0 0 5px 18px; }
  .off input { background: #f0f0f0; color: #838383; }
  .off button { color: #888; }
  .choice { display: flex; width: 159px; height: 25px; border: 1px solid #abadb3; background: #fff; position: relative; }
  .choice select { appearance: none; border: 0; background: none; width: 100%; padding: 0 3px; color: #000; }
  .choice span { position: absolute; right: 0; top: 0; width: 17px; height: 23px; display: flex; align-items: center; justify-content: center; border: 1px solid #707070; background: linear-gradient(#f2f2f2 50%, #dcdcdc 50%, #cfcfcf); pointer-events: none; }
  .check { display: flex; align-items: center; gap: 4px; height: 27px; white-space: nowrap; }
  .check input { appearance: none; width: 13px; height: 13px; border: 1px solid #8e8f8f; background: linear-gradient(135deg, #cbcfd5, #f6f6f6); box-shadow: inset 0 0 0 2px #f4f4f4; }
  .actions { display: flex; gap: 10px; }
  .actions button { width: 74px; height: 25px; border: 1px solid #707070; border-radius: 3px; background: linear-gradient(#f2f2f2 50%, #dcdcdc 50%, #cfcfcf); box-shadow: inset 0 0 0 1px #fcfcfc; }
  .actions .ok { border-color: #3c7fb1; box-shadow: inset 0 0 0 1px #40c8f0; outline: 1px dotted #000; outline-offset: -4px; }
  .frame { position: absolute; left: 287px; top: 149px; width: 174px; height: 58px; border: 3px solid #fc3434; }
  .note { position: absolute; left: 483px; top: 162px; font-size: 16px; line-height: 20px; color: #fc3434; white-space: nowrap; }

  .status { display: flex; align-items: center; height: 22px; flex: none; background: #2b579a; color: #fff; padding-left: 7px; white-space: nowrap; }
  .status > span { margin-right: 22px; }
  .status > button:not(.step) { margin-right: 16px; }
  .views { display: flex; margin-left: auto; height: 22px; }
  .views button { width: 38px; }
  .views .current { background: #1b478a; }
  .status .step { width: 8px; margin-left: 5px; }
  .status input { appearance: none; width: 100px; height: 12px; margin: 0 0 0 2px; background: linear-gradient(#fff, #fff) center / 100% 1px no-repeat; }
  .status input::-webkit-slider-thumb { appearance: none; width: 4px; height: 11px; background: #fff; }
  .status .percent { width: 34px; margin: 0 18px 0 14px; }
</style>
